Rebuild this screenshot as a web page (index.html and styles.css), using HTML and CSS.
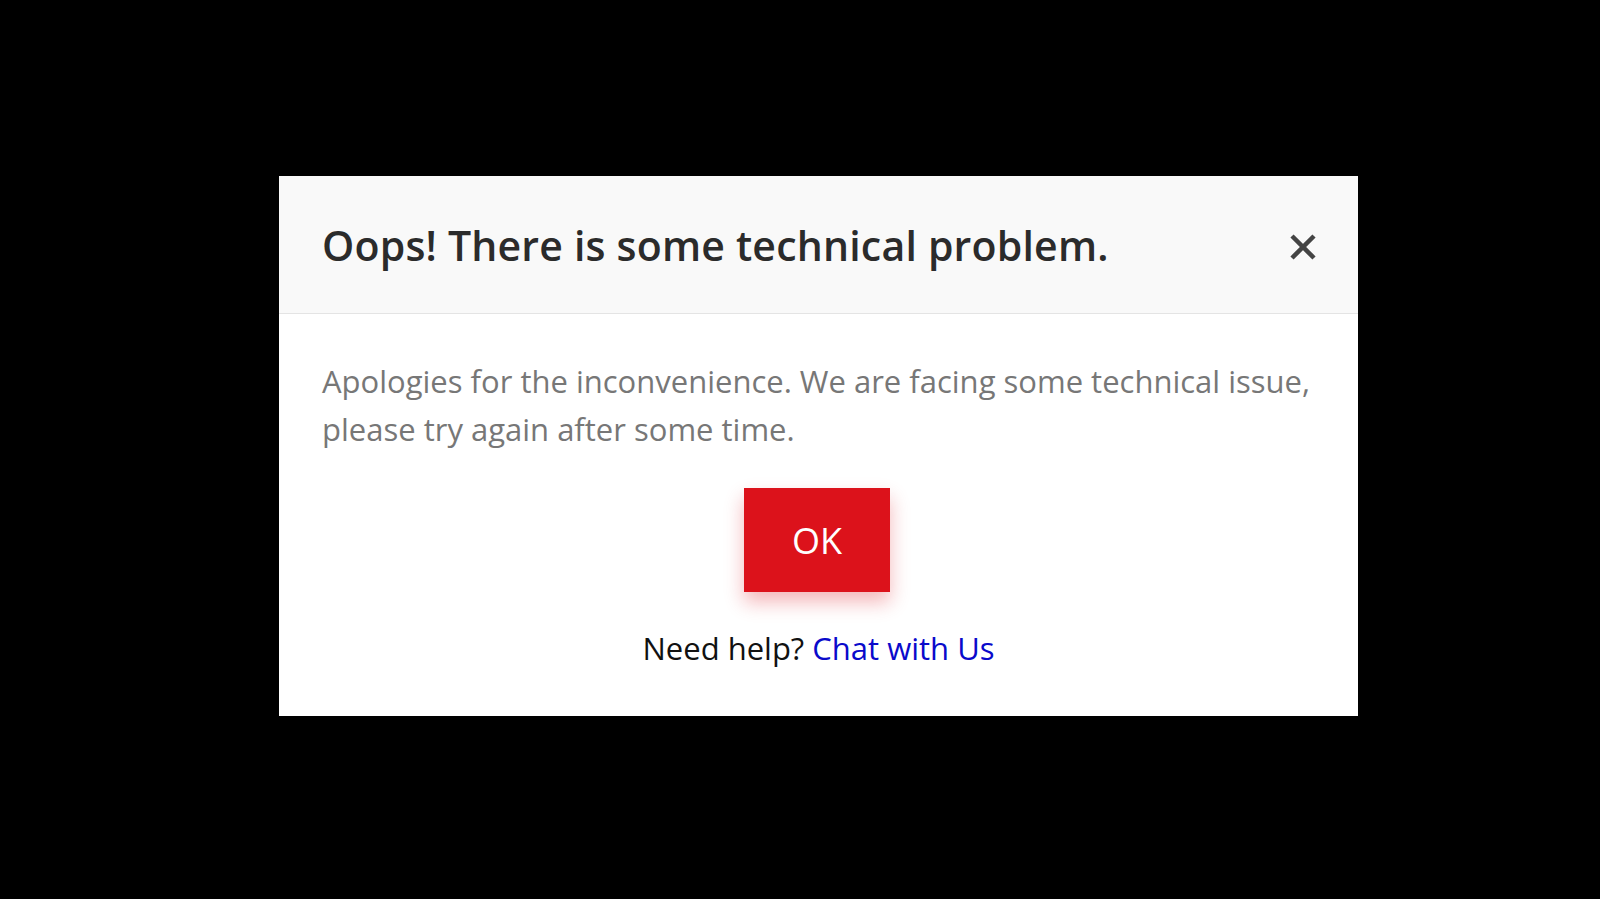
FILE: index.html
```html
<!DOCTYPE html>
<html lang="en">
<head>
<meta charset="utf-8">
<title>Technical problem</title>
<link rel="stylesheet" href="styles.css">
</head>
<body>
<div class="overlay">
  <div class="modal">
    <div class="modal-header">
      <h2 class="modal-title">Oops! There is some technical problem.</h2>
      <button class="close" aria-label="Close">
        <svg width="28" height="28" viewBox="0 0 28 28"><path d="M3 3 L25 25 M25 3 L3 25" stroke="#444" stroke-width="4.5" stroke-linecap="butt"/></svg>
      </button>
    </div>
    <div class="modal-body">
      <p class="message">Apologies for the inconvenience. We are facing some technical issue, please try again after some time.</p>
      <div class="actions"><button class="ok">OK</button></div>
      <p class="help">Need help? <a href="#" class="chat">Chat with Us</a></p>
    </div>
  </div>
</div>
</body>
</html>
```

FILE: styles.css
```css
html, body {
  margin: 0;
  padding: 0;
  background: #000;
  height: 100%;
}
body {
  font-family: "Open Sans", "Noto Sans", sans-serif;
}
.overlay {
  padding: 176px 0 0 279px;
}
.modal {
  width: 1079px;
  height: 540px;
  background: #fff;
  display: flex;
  flex-direction: column;
}
.modal-header {
  height: 137px;
  background: #f9f9f9;
  border-bottom: 1px solid #e4e4e4;
  display: flex;
  align-items: center;
  justify-content: space-between;
  padding: 0 41px 0 43px;
}
.modal-title {
  margin: 0;
  font-size: 41px;
  font-weight: 600;
  color: #2b2b2b;
  letter-spacing: 0.2px;
}
.close {
  background: none;
  border: 0;
  padding: 0;
  width: 28px;
  height: 28px;
  display: flex;
  margin-top: 4px;
}
.modal-body {
  padding: 43px 43px 0 43px;
}
.message {
  margin: 0;
  font-size: 31px;
  line-height: 48px;
  color: #777;
}
.actions {
  display: flex;
  justify-content: center;
  margin-top: 35px;
  padding-right: 3px;
}
.ok {
  width: 146px;
  height: 104px;
  background: #dc121b;
  color: #fff;
  border: 0;
  font-family: inherit;
  font-size: 36px;
  font-weight: 500;
  box-shadow: 0 10px 18px rgba(220, 18, 27, 0.3);
}
.help {
  margin: 35px 0 0;
  text-align: center;
  font-size: 31px;
  font-weight: 500;
  color: #111;
}
.chat {
  color: #0a0acb;
  text-decoration: none;
}
```
